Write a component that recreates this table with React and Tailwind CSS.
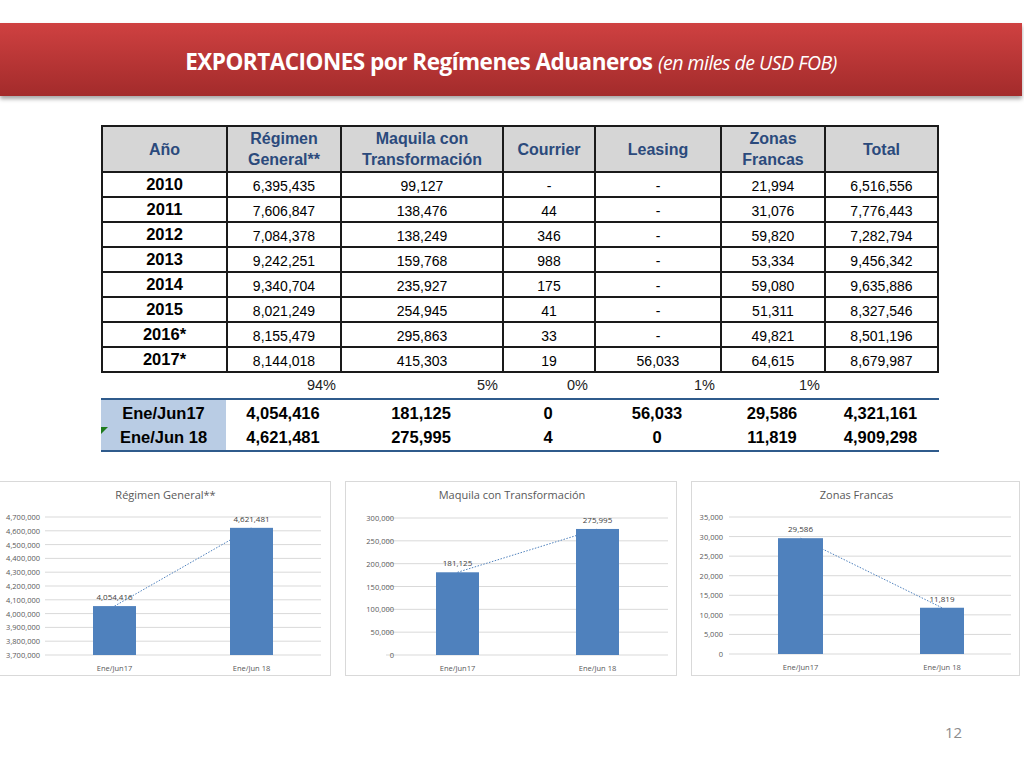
const rows = [
  ['2010', '6,395,435', '99,127', '-', '-', '21,994', '6,516,556'],
  ['2011', '7,606,847', '138,476', '44', '-', '31,076', '7,776,443'],
  ['2012', '7,084,378', '138,249', '346', '-', '59,820', '7,282,794'],
  ['2013', '9,242,251', '159,768', '988', '-', '53,334', '9,456,342'],
  ['2014', '9,340,704', '235,927', '175', '-', '59,080', '9,635,886'],
  ['2015', '8,021,249', '254,945', '41', '-', '51,311', '8,327,546'],
  ['2016*', '8,155,479', '295,863', '33', '-', '49,821', '8,501,196'],
  ['2017*', '8,144,018', '415,303', '19', '56,033', '64,615', '8,679,987'],
]

const summary = [
  ['Ene/Jun17', '4,054,416', '181,125', '0', '56,033', '29,586', '4,321,161'],
  ['Ene/Jun 18', '4,621,481', '275,995', '4', '0', '11,819', '4,909,298'],
]

const cols = 'grid grid-cols-[125px_114px_162px_92px_126px_104px_113px]'

function Chart({ title, w, ticks, labelX, gridX0, top, bottom, max, min, bars, first }) {
  const y = (v) => bottom - ((v - min) / (max - min)) * (bottom - top)
  const c0 = (bars[0].x0 + bars[0].x1) / 2
  const c1 = (bars[1].x0 + bars[1].x1) / 2
  return (
    <div className={`h-[195px] border border-[#d9d9d9] bg-white ${first ? 'border-l-0' : ''}`} style={{ width: w }}>
      <svg width={w} height={193} className="block" style={{ fontFamily: '"Open Sans", sans-serif' }}>
        <text x={w / 2} y={17} textAnchor="middle" fontSize="11" fill="#595959">{title}</text>
        {ticks.map((t) => (
          <g key={t.label}>
            <line x1={gridX0} x2={w - 10} y1={y(t.v)} y2={y(t.v)} stroke="#d9d9d9" strokeWidth="1" />
            <text x={labelX} y={y(t.v) + 3} textAnchor="end" fontSize="7.5" fill="#595959">{t.label}</text>
          </g>
        ))}
        <line x1={c0} y1={y(bars[0].v)} x2={c1} y2={y(bars[1].v)} stroke="#4f81bd" strokeWidth="1" strokeDasharray="1.5 1.5" />
        {bars.map((b) => (
          <g key={b.label}>
            <rect x={b.x0} y={y(b.v)} width={b.x1 - b.x0} height={bottom - y(b.v)} fill="#4f81bd" />
            <text x={(b.x0 + b.x1) / 2} y={y(b.v) - 6} textAnchor="middle" fontSize="8" fill="#404040">{b.label}</text>
            <text x={(b.x0 + b.x1) / 2} y={bottom + 16} textAnchor="middle" fontSize="7.5" fill="#595959">{b.name}</text>
          </g>
        ))}
      </svg>
    </div>
  )
}

export default function App() {
  return (
    <div className="w-[1024px] h-[768px] bg-white overflow-hidden flex flex-col" style={{ fontFamily: '"Liberation Sans", Arial, sans-serif' }}>
      {/* banner */}
      <div className="mt-[23px] w-[1022px] h-[73px] bg-linear-to-b from-[#cf4141] to-[#a32b2b] shadow-[0_3px_4px_rgba(0,0,0,0.35)] flex items-center justify-center">
        <h1 className="text-white text-[22.5px] tracking-[-0.5px] pt-[5px]" style={{ fontFamily: '"Open Sans", sans-serif' }}>
          <span className="font-bold">EXPORTACIONES por Regímenes Aduaneros</span>{' '}
          <span className="italic text-[19.5px]">(en miles de USD FOB)</span>
        </h1>
      </div>

      {/* table */}
      <div className="ml-[101px] mt-[29px] w-[838px]">
        <table className="table-fixed border-collapse border-2 border-[#1a1a1a] w-[838px]">
          <colgroup>
            <col className="w-[125px]" /><col className="w-[114px]" /><col className="w-[162px]" />
            <col className="w-[92px]" /><col className="w-[126px]" /><col className="w-[104px]" /><col className="w-[113px]" />
          </colgroup>
          <thead>
            <tr className="h-[46px] bg-[#d6d6d6] text-[#2b4a7c] text-[16px] font-bold leading-[21px]">
              <th className="border-2 border-[#1a1a1a]">Año</th>
              <th className="border-2 border-[#1a1a1a]">Régimen<br />General**</th>
              <th className="border-2 border-[#1a1a1a]">Maquila con<br />Transformación</th>
              <th className="border-2 border-[#1a1a1a]">Courrier</th>
              <th className="border-2 border-[#1a1a1a]">Leasing</th>
              <th className="border-2 border-[#1a1a1a]">Zonas<br />Francas</th>
              <th className="border-2 border-[#1a1a1a]">Total</th>
            </tr>
          </thead>
          <tbody>
            {rows.map((r) => (
              <tr key={r[0]} className="h-[25px]">
                {r.map((c, i) => (
                  <td key={i} className={`border-2 border-[#1a1a1a] text-center p-0 leading-none ${i === 0 ? 'text-[16.5px] font-bold' : 'text-[14px] pt-[3px]'}`}>{c}</td>
                ))}
              </tr>
            ))}
          </tbody>
        </table>

        {/* share row */}
        <div className={`${cols} h-[25px] items-center text-[14.5px] text-right text-[#222]`}>
          <span />
          <span className="pr-[4px]">94%</span>
          <span className="pr-[4px]">5%</span>
          <span className="pr-[6px]">0%</span>
          <span className="pr-[5px]">1%</span>
          <span className="pr-[4px]">1%</span>
          <span />
        </div>

        {/* semester comparison */}
        <div className="border-t-2 border-b-2 border-[#2f5b8c] relative">
          <div className="absolute left-0 top-[27px] w-0 h-0 border-t-[7px] border-t-[#1e7b1e] border-r-[7px] border-r-transparent" />
          {summary.map((r, ri) => (
            <div key={r[0]} className={`${cols} h-[25px] items-center text-[16.5px] font-bold text-center`}>
              {r.map((c, i) => (
                <span key={i} className={`h-full flex items-center justify-center ${i === 0 ? 'bg-[#b9cce4]' : ''} ${ri === 0 ? 'pt-[1px]' : ''}`}>{c}</span>
              ))}
            </div>
          ))}
        </div>
      </div>

      {/* charts */}
      <div className="mt-[29px] flex gap-[14px]">
        <Chart
          first
          title="Régimen General**"
          w={331}
          labelX={40}
          gridX0={45}
          top={35}
          bottom={173}
          min={3700000}
          max={4700000}
          ticks={[4700000, 4600000, 4500000, 4400000, 4300000, 4200000, 4100000, 4000000, 3900000, 3800000, 3700000].map((v) => ({ v, label: v.toLocaleString('en-US') }))}
          bars={[
            { x0: 93, x1: 136, v: 4054416, label: '4,054,416', name: 'Ene/Jun17' },
            { x0: 230, x1: 273, v: 4621481, label: '4,621,481', name: 'Ene/Jun 18' },
          ]}
        />
        <Chart
          title="Maquila con Transformación"
          w={332}
          labelX={48}
          gridX0={40}
          top={36}
          bottom={173}
          min={0}
          max={300000}
          ticks={[300000, 250000, 200000, 150000, 100000, 50000, 0].map((v) => ({ v, label: v.toLocaleString('en-US') }))}
          bars={[
            { x0: 90, x1: 133, v: 181125, label: '181,125', name: 'Ene/Jun17' },
            { x0: 230, x1: 273, v: 275995, label: '275,995', name: 'Ene/Jun 18' },
          ]}
        />
        <Chart
          title="Zonas Francas"
          w={329}
          labelX={31}
          gridX0={37}
          top={35}
          bottom={172}
          min={0}
          max={35000}
          ticks={[35000, 30000, 25000, 20000, 15000, 10000, 5000, 0].map((v) => ({ v, label: v.toLocaleString('en-US') }))}
          bars={[
            { x0: 86, x1: 131, v: 29586, label: '29,586', name: 'Ene/Jun17' },
            { x0: 228, x1: 272, v: 11819, label: '11,819', name: 'Ene/Jun 18' },
          ]}
        />
      </div>

      <div className="mt-[45px] ml-[945px] text-[15px] text-[#8c8c8c]" style={{ fontFamily: '"Open Sans", sans-serif' }}>12</div>
    </div>
  )
}
